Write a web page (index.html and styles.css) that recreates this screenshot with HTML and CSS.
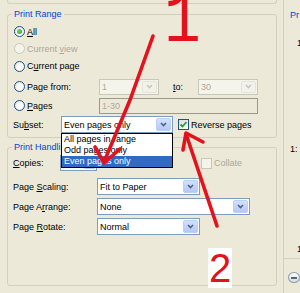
FILE: index.html
```html
<!DOCTYPE html>
<html>
<head>
<meta charset="utf-8">
<title>Print Range</title>
<link rel="stylesheet" href="styles.css">
</head>
<body>
<div class="page">
  <div class="main">
    <div class="prev-box"></div>

    <div class="group range">
      <div class="legend">Print Range</div>
      <div class="row h17 opt"><span class="radio on"></span><span><u>A</u>ll</span></div>
      <div class="row h17 opt off"><span class="radio dis"></span><span>Current <u>v</u>iew</span></div>
      <div class="row h18 opt"><span class="radio"></span><span>C<u>u</u>rrent page</span></div>
      <div class="row h21 grid-from">
        <div class="opt"><span class="radio"></span><span>Pa<u>g</u>e from:</span></div>
        <div class="combo dis"><span class="val">1</span><span class="btn"><svg width="7" height="5" viewBox="0 0 7 5"><path d="M1 1l2.5 2.5L6 1" fill="none" stroke="#c9c7ba" stroke-width="1.6"/></svg></span></div>
        <span class="to"><u>t</u>o:</span>
        <div class="combo dis"><span class="val">30</span><span class="btn"><svg width="7" height="5" viewBox="0 0 7 5"><path d="M1 1l2.5 2.5L6 1" fill="none" stroke="#c9c7ba" stroke-width="1.6"/></svg></span></div>
      </div>
      <div class="row h19 grid-pages">
        <div class="opt"><span class="radio"></span><span><u>P</u>ages</span></div>
        <div class="textbox dis">1-30</div>
      </div>
      <div class="row h19 subset-row">
        <span class="lbl">Su<u>b</u>set:</span>
        <div class="combo subset">
          <span class="val">Even pages only</span>
          <span class="btn"><svg width="7" height="5" viewBox="0 0 7 5"><path d="M1 1l2.5 2.5L6 1" fill="none" stroke="#4d6185" stroke-width="1.6"/></svg></span>
          <ul class="droplist">
            <li>All pages in range</li>
            <li>Odd pages only</li>
            <li class="sel">Even pages only</li>
          </ul>
        </div>
        <span class="check"><span class="box on"><svg width="9" height="9" viewBox="0 0 9 9"><path d="M1.5 4.5l2 2L7.5 2" fill="none" stroke="#21a121" stroke-width="1.8"/></svg></span>Reverse pages</span>
      </div>
    </div>

    <div class="group handling">
      <div class="legend">Print Handling</div>
      <div class="row h16 copies-row">
        <span class="lbl"><u>C</u>opies:</span>
        <div class="spin"><span class="val">1</span><span class="arrows"><i></i><i></i></span></div>
        <span class="check off"><span class="box dis"></span>Collate</span>
      </div>
      <div class="row h17 field">
        <span class="lbl">Page <u>S</u>caling:</span>
        <div class="combo w103"><span class="val">Fit to Paper</span><span class="btn"><svg width="7" height="5" viewBox="0 0 7 5"><path d="M1 1l2.5 2.5L6 1" fill="none" stroke="#4d6185" stroke-width="1.6"/></svg></span></div>
      </div>
      <div class="row h17 field">
        <span class="lbl">Page A<u>r</u>range:</span>
        <div class="combo w153"><span class="val">None</span><span class="btn"><svg width="7" height="5" viewBox="0 0 7 5"><path d="M1 1l2.5 2.5L6 1" fill="none" stroke="#4d6185" stroke-width="1.6"/></svg></span></div>
      </div>
      <div class="row h17 field">
        <span class="lbl">Page <u>R</u>otate:</span>
        <div class="combo w103"><span class="val">Normal</span><span class="btn"><svg width="7" height="5" viewBox="0 0 7 5"><path d="M1 1l2.5 2.5L6 1" fill="none" stroke="#4d6185" stroke-width="1.6"/></svg></span></div>
      </div>
    </div>
  </div>

  <div class="side">
    <div class="side-legend">Pr</div>
    <div class="side-num one">1</div>
    <div class="side-num two">1:</div>
    <div class="side-num three">1</div>
    <div class="side-foot"><span class="zoom-btn"></span></div>
  </div>

  <!-- red annotations drawn over the dialog -->
  <svg class="marks" width="300" height="293" viewBox="0 0 300 293">
    <g fill="none" stroke="#e3121c" stroke-width="3.6" stroke-linecap="round" stroke-linejoin="round">
      <polyline points="153,36 130,100 104,162"/>
      <polyline points="95,147 104,163 120,149"/>
      <polyline points="217,226 186,134"/>
      <polyline points="183,150 186,133 203,142"/>
    </g>
  </svg>
  <span class="mark-one">1</span>
  <span class="mark-two">2</span>
</div>
</body>
</html>
```

FILE: styles.css
```css
*{margin:0;padding:0;box-sizing:border-box;}
body{background:#ece9d8;font:9px "Liberation Sans",Arial,sans-serif;color:#000;}
ul{list-style:none;}
.page
{
	position:relative;
	width:300px;
	height:293px;
	overflow:hidden;
	display:flex;
	background:#ece9d8;
}
.main{width:283px;flex:none;}
.prev-box
{
	height:4px;
	margin-left:7px;
	width:270px;
	border:1px solid #d0d0bf;
	border-top:none;
	border-radius:0 0 3px 3px;
}
.group
{
	margin:10px 0 0 7px;
	width:270px;
	border:1px solid #d0d0bf;
	border-radius:3px;
}
.group.handling{margin-top:9px;height:139px;}
.range{padding-bottom:3px;}
.legend
{
	display:table;
	margin:-6px 0 4px 4px;
	padding:0 2px;
	height:10px;
	line-height:10px;
	background:#ece9d8;
	color:#0046d5;
}
.handling .legend{margin-bottom:3px;}
.row{display:flex;align-items:center;}
.h16{height:16px;}
.h17{height:17px;}
.h18{height:18px;}
.h19{height:19px;}
.h21{height:21px;}
.opt{display:flex;align-items:center;gap:2px;padding-left:6px;}
.off{color:#aca899;}
.radio
{
	width:11px;
	height:11px;
	border:1px solid #1c5180;
	border-radius:50%;
	background:radial-gradient(circle at 60% 60%,#fff 30%,#dcd9ce);
	display:flex;
	align-items:center;
	justify-content:center;
	flex:none;
}
.radio.on::after
{
	content:"";
	width:5px;
	height:5px;
	border-radius:50%;
	background:radial-gradient(circle at 40% 40%,#6fd86f,#21a121);
}
.radio.dis{border-color:#cac8bb;background:#f5f4ea;}

.grid-from{display:grid;grid-template-columns:91px 60px 39px 60px;align-items:center;padding-top:2px;}
.grid-pages{display:grid;grid-template-columns:91px 159px;align-items:center;}
.to{padding-left:14px;}

.combo
{
	position:relative;
	display:flex;
	align-items:center;
	height:17px;
	border:1px solid #7f9db9;
	background:#fff;
}
.grid-from .combo{height:16px;}
.combo .val{flex:1;padding-left:2px;white-space:nowrap;overflow:hidden;}
.combo .btn
{
	align-self:stretch;
	width:15px;
	margin:1px;
	border:1px solid #b9d0f9;
	border-radius:2px;
	background:linear-gradient(#d3e0fd,#b4c8f4);
	display:flex;
	align-items:center;
	justify-content:center;
}
.combo.dis{border-color:#c9c7ba;background:#f5f4ea;color:#aca899;}
.combo.dis .btn{border-color:#e6e4da;background:#f3f2ea;}
.textbox
{
	height:16px;
	line-height:14px;
	border:1px solid #9a9a8c;
	padding-left:2px;
	background:#ece9d8;
	color:#aca899;
	margin-top:1px;
}

.lbl{padding-left:5px;flex:none;}
.subset-row .lbl{width:53px;}
.subset.combo{width:112px;}
.droplist
{
	position:absolute;
	left:-1px;
	top:16px;
	width:112px;
	border:1px solid #000;
	background:#fff;
	z-index:2;
}
.droplist li{height:11px;line-height:11px;padding-left:2px;white-space:nowrap;}
.droplist li.sel{background:#316ac5;color:#fff;}

.check{display:flex;align-items:center;gap:2px;margin-left:5px;}
.check .box
{
	width:11px;
	height:11px;
	border:1px solid #1c5180;
	background:linear-gradient(135deg,#dcdbd5,#fff);
	display:flex;
	align-items:center;
	justify-content:center;
}
.check .box.dis{border-color:#c9c7ba;background:#f5f4ea;}
.check.off{color:#aca899;margin-left:104px;}

.copies-row .lbl{width:52px;}
.spin
{
	display:flex;
	flex:none;
	width:37px;
	height:16px;
	border:1px solid #7f9db9;
	background:#fff;
}
.spin .val{flex:1;padding-left:2px;line-height:14px;}
.spin .arrows{width:13px;display:flex;flex-direction:column;gap:1px;padding:1px;}
.spin .arrows i{flex:1;background:linear-gradient(#d3e0fd,#b4c8f4);border-radius:1px;}

.field{margin-top:3px;}
.copies-row + .field{margin-top:7px;}
.field .lbl{width:89px;}
.w103{width:103px;}
.w153{width:153px;}

.side
{
	flex:1;
	border-left:1px solid #d0d0bf;
	position:relative;
}
.side-legend{color:#0046d5;margin:10px 0 0 6px;line-height:10px;}
.side-num{margin-left:13px;line-height:10px;}
.side-num.one{margin-top:18px;}
.side-num.two{margin:96px 0 0 6px;}
.side-num.three{margin-top:90px;}
.side-foot
{
	margin-top:4px;
	border-top:1px solid #d0d0bf;
	height:28px;
	padding:13px 0 0 4px;
}
.zoom-btn
{
	display:flex;
	align-items:center;
	justify-content:center;
	width:12px;
	height:11px;
	border:1px solid #8f99a8;
	border-radius:50%;
	background:linear-gradient(#fff,#d6dbe6);
}
.zoom-btn::after{content:"";width:6px;height:2px;background:#5a6478;}

.marks{position:absolute;left:0;top:0;pointer-events:none;z-index:5;}
.mark-one
{
	position:absolute;
	left:164px;
	top:-14px;
	font:72px/72px "Liberation Mono",monospace;
	color:#e3121c;
	transform:scaleX(0.85);
	transform-origin:0 0;
	z-index:5;
}
.mark-two
{
	position:absolute;
	left:208px;
	top:248px;
	width:24px;
	height:40px;
	background:#fff;
	font:40px/40px "Liberation Sans",Arial,sans-serif;
	color:#e3121c;
	text-align:center;
	z-index:5;
}
```
